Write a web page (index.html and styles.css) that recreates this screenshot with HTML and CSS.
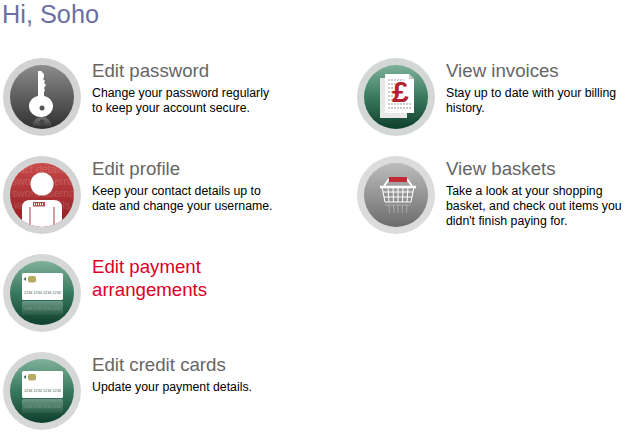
FILE: index.html
```html
<!DOCTYPE html>
<html lang="en">
<head>
    <meta charset="UTF-8">
    <title>My account</title>
    <link rel="stylesheet" href="styles.css">
</head>
<body>
    <svg class="defs" width="0" height="0">
        <defs>
            <linearGradient id="gradGrey" x1="0" y1="0" x2="0" y2="1">
                <stop offset="0" stop-color="#8c8c8c"/>
                <stop offset="1" stop-color="#303030"/>
            </linearGradient>
            <linearGradient id="gradLight" x1="0" y1="0" x2="0" y2="1">
                <stop offset="0" stop-color="#bdbdbd"/>
                <stop offset="1" stop-color="#6c6c6c"/>
            </linearGradient>
            <linearGradient id="gradRed" x1="0" y1="0" x2="0" y2="1">
                <stop offset="0" stop-color="#c94a4a"/>
                <stop offset="1" stop-color="#8e1a1e"/>
            </linearGradient>
            <linearGradient id="gradGreen" x1="0" y1="0" x2="0" y2="1">
                <stop offset="0" stop-color="#7fb09a"/>
                <stop offset=".5" stop-color="#387a5f"/>
                <stop offset="1" stop-color="#0f3f2d"/>
            </linearGradient>
            <linearGradient id="gradFade" x1="0" y1="0" x2="0" y2="1">
                <stop offset="0" stop-color="#fff" stop-opacity=".3"/>
                <stop offset="1" stop-color="#fff" stop-opacity=".05"/>
            </linearGradient>
            <clipPath id="clipDisc"><circle cx="39" cy="39" r="32"/></clipPath>
            <symbol id="cardIcon" viewBox="0 0 78 78">
                <circle cx="39" cy="39" r="39" fill="#d6d8d7"/>
                <circle cx="39" cy="39" r="32" fill="url(#gradGreen)"/>
                <rect x="19" y="47" width="41" height="14" rx="1.500" fill="url(#gradFade)"/>
                <rect x="19" y="19" width="41" height="27" rx="1.500" fill="#fff"/>
                <rect x="25" y="22" width="8" height="6.500" rx="2" fill="#b5ab62"/>
                <path d="M20.500 25l2.500-2v4z" fill="#3f6a56"/>
                <text class="card-digits" x="21" y="40">1234 1234 1234 1234</text>
                <text class="card-digits card-ghost" x="21" y="56">1234 1234 1234 1234</text>
            </symbol>
        </defs>
    </svg>

    <h1 class="greeting">Hi, Soho</h1>

    <div class="menu">
        <div class="item">
            <svg class="icon" viewBox="0 0 78 78">
                <circle cx="39" cy="39" r="39" fill="#d3d3d3"/>
                <circle cx="39" cy="39" r="32" fill="url(#gradGrey)"/>
                <path d="M35 13h3l3 3v3l-1 2 2 2-1 2 2 2-2 3 1 2-1 2v4c5 1 9 5 9 10 0 6-5 11-12 11s-12-5-12-11c0-5 4-9 9-10z" fill="#fff"/>
                <circle cx="39" cy="50" r="2.500" fill="#555"/>
                <path d="M30 68c-1-5 4-9 9-9s10 4 9 9z" fill="url(#gradFade)"/>
                <circle cx="39" cy="64" r="2.500" fill="#444"/>
            </svg>
            <div class="item-text">
                <h2 class="item-title">Edit password</h2>
                <p class="item-desc">Change your password regularly<br>to keep your account secure.</p>
            </div>
        </div>
        <div class="item">
            <svg class="icon" viewBox="0 0 78 78">
                <circle cx="39" cy="39" r="39" fill="#d3d7d5"/>
                <circle cx="39" cy="39" r="32" fill="url(#gradGreen)"/>
                <rect x="23" y="20" width="27" height="40" fill="#e8e8e8"/>
                <path d="M28 16h24l5 5v34H28z" fill="#fff"/>
                <path d="M52 16v5h5z" fill="#c9c9c9"/>
                <path class="doc-lines" d="M31 22h16M31 26h16M31 30h5M31 34h5M31 38h5M31 42h5M31 46h23M31 50h23"/>
                <text class="pound" x="35" y="44">£</text>
            </svg>
            <div class="item-text">
                <h2 class="item-title">View invoices</h2>
                <p class="item-desc">Stay up to date with your billing<br>history.</p>
            </div>
        </div>
        <div class="item">
            <svg class="icon" viewBox="0 0 78 78">
                <circle cx="39" cy="39" r="39" fill="#d4d4d4"/>
                <circle cx="39" cy="39" r="32" fill="url(#gradRed)"/>
                <text class="bg-words" x="16" y="17">act details</text>
                <text class="bg-words" x="9" y="29">sword userna</text>
                <text class="bg-words" x="9" y="41">sword userna</text>
                <text class="bg-words" x="11" y="53">word details</text>
                <g clip-path="url(#clipDisc)">
                    <path d="M19 72V52q0-8 8-8h24q8 0 8 8v20z" fill="#fff"/>
                    <path class="body-seam" d="M27 51v21M51 51v21"/>
                </g>
                <circle cx="39" cy="28" r="11.500" fill="#fff"/>
                <rect x="30" y="46" width="12" height="4.500" fill="#b8474a"/>
                <path class="badge-dots" d="M31 48.200h10"/>
            </svg>
            <div class="item-text">
                <h2 class="item-title">Edit profile</h2>
                <p class="item-desc">Keep your contact details up to<br>date and change your username.</p>
            </div>
        </div>
        <div class="item">
            <svg class="icon" viewBox="0 0 78 78">
                <circle cx="39" cy="39" r="39" fill="#dcdcdc"/>
                <circle cx="39" cy="39" r="32" fill="url(#gradLight)"/>
                <path class="basket-handle" d="M27 30l5-7M55 30l-5-7"/>
                <rect x="32" y="21" width="18" height="5" fill="#c22a36"/>
                <path class="basket-rim" d="M23 31h36"/>
                <path class="basket-frame" d="M25 31l3 15h26l3-15M26 36h30M27 41h28M31 31l1 15M36 31l.500 15M41 31v15M46 31l-.500 15M51 31l-1 15"/>
                <path class="basket-ghost" d="M28 49h26M32 49l.500 8M36.500 49l.500 8M41 49v8M45.500 49l-.500 8M50 49l-.500 8"/>
            </svg>
            <div class="item-text">
                <h2 class="item-title">View baskets</h2>
                <p class="item-desc">Take a look at your shopping<br>basket, and check out items you<br>didn't finish paying for.</p>
            </div>
        </div>
        <div class="item">
            <svg class="icon"><use href="#cardIcon"/></svg>
            <div class="item-text">
                <h2 class="item-title item-title-active">Edit payment arrangements</h2>
            </div>
        </div>
        <div class="item"></div>
        <div class="item">
            <svg class="icon"><use href="#cardIcon"/></svg>
            <div class="item-text">
                <h2 class="item-title">Edit credit cards</h2>
                <p class="item-desc">Update your payment details.</p>
            </div>
        </div>
    </div>
</body>
</html>
```

FILE: styles.css
```css
body {
    font-family: "Liberation Sans", Arial, sans-serif;
    margin: 0;
    padding: 0;
    background-color: #fff;
    overflow: hidden;
}
.defs {
    display: block;
    height: 0;
}
.greeting {
    margin: 0;
    padding: 0 0 0 2px;
    height: 58px;
    font-size: 25.300px;
    line-height: 28px;
    font-weight: normal;
    color: #6b6fa3;
}
.menu {
    display: grid;
    grid-template-columns: 354px 271px;
    grid-auto-rows: 98px;
    padding-left: 3px;
}
.item {
    display: flex;
    gap: 11px;
}
.icon {
    width: 78px;
    height: 78px;
    flex-shrink: 0;
}
.item-text {
    padding-top: 1px;
}
.item-title {
    margin: 0 0 4px;
    font-size: 18.670px;
    line-height: 23px;
    font-weight: normal;
    color: #666;
}
.item-title-active {
    width: 150px;
    color: #dc0028;
}
.item-desc {
    margin: 0;
    font-size: 12.300px;
    line-height: 15px;
    color: #000;
}
.card-digits {
    font-size: 3.800px;
    font-family: "Liberation Sans", sans-serif;
    fill: #3f5f50;
}
.card-ghost {
    fill: #fff;
    opacity: .25;
}
.doc-lines {
    stroke: #999;
    stroke-width: 1;
    stroke-dasharray: 2 1;
    fill: none;
}
.pound {
    font-size: 30px;
    font-weight: bold;
    font-family: "Liberation Sans", sans-serif;
    fill: #b5202e;
}
.bg-words {
    font-size: 10.500px;
    font-family: "Liberation Sans", sans-serif;
    fill: #fff;
    opacity: .16;
}
.body-seam {
    stroke: #a83a3e;
    stroke-width: 1;
    fill: none;
}
.badge-dots {
    stroke: #fff;
    stroke-width: 2;
    stroke-dasharray: 1 1;
    fill: none;
}
.basket-handle {
    stroke: #fff;
    stroke-width: 2;
    fill: none;
}
.basket-rim {
    stroke: #fff;
    stroke-width: 2.500;
    fill: none;
}
.basket-frame {
    stroke: #fff;
    stroke-width: 1;
    fill: none;
}
.basket-ghost {
    stroke: #fff;
    stroke-width: 1;
    fill: none;
    opacity: .3;
}
```
